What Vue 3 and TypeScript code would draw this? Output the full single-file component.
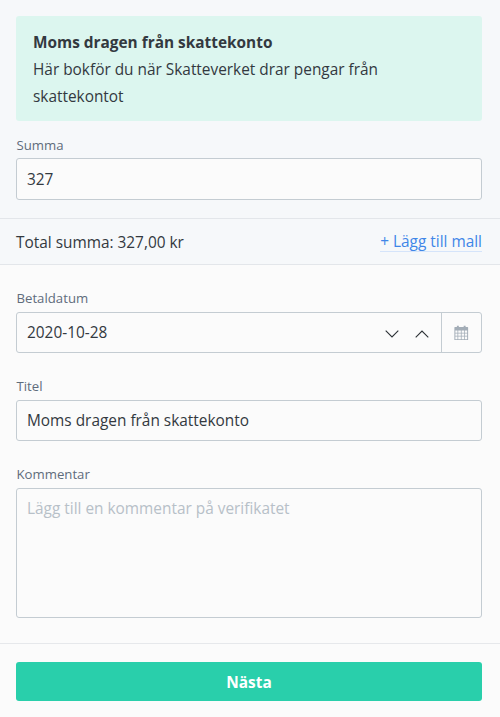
<script setup lang="ts">
const heading = 'Moms dragen från skattekonto'
</script>

<template>
  <div class="page">
    <section class="top">
      <div class="info">
        <strong>{{ heading }}</strong>
        <p>Här bokför du när Skatteverket drar pengar från skattekontot</p>
      </div>
      <label class="field first">
        <span class="label">Summa</span>
        <input class="input" value="327" />
      </label>
    </section>
    <div class="total">
      <span>Total summa: 327,00 kr</span>
      <a class="link">+ Lägg till mall</a>
    </div>
    <section class="form">
      <div class="field">
        <span class="label">Betaldatum</span>
        <div class="date">
          <span class="date-value">2020-10-28</span>
          <svg class="chev down" width="14" height="8" viewBox="0 0 14 8"><path d="M.7.7 7 6.900 13.300.7" /></svg>
          <svg class="chev up" width="14" height="8" viewBox="0 0 14 8"><path d="M.7 7.300 7 1.100l6.300 6.200" /></svg>
          <div class="cal">
            <svg width="15" height="16" viewBox="0 0 15 16">
              <path class="cal-body" fill-rule="evenodd" d="M1 2h2V.8h2V2h5V.8h2V2h2a.6.6 0 0 1 .6.6v12.600a.6.6 0 0 1-.6.6H1a.6.6 0 0 1-.6-.6V2.600A.6.6 0 0 1 1 2Zm.4 3.800v2.200h2.200V5.800Zm3 0v2.200h2.700V5.800Zm3.500 0v2.200h2.700V5.800Zm3.500 0v2.200h2.200V5.800Zm-10 3v2.200h2.200V8.800Zm3 0v2.200h2.700V8.800Zm3.500 0v2.200h2.700V8.800Zm3.500 0v2.200h2.200V8.800Zm-10 3v3h2.200v-3Zm3 0v3h2.700v-3Zm3.500 0v3h2.700v-3Zm3.500 0v3h2.200v-3Z" />
            </svg>
          </div>
        </div>
      </div>
      <label class="field">
        <span class="label">Titel</span>
        <input class="input short" value="Moms dragen från skattekonto" />
      </label>
      <label class="field">
        <span class="label">Kommentar</span>
        <textarea class="input area" placeholder="Lägg till en kommentar på verifikatet"></textarea>
      </label>
    </section>
    <footer class="foot">
      <button class="next">Nästa</button>
    </footer>
  </div>
</template>

<style>
html, body { margin: 0; background: #fbfbfb; }
</style>

<style scoped>
.page {
  width: 500px;
  height: 717px;
  box-sizing: border-box;
  background: #fbfbfb;
  color: #33393f;
  font-family: "Open Sans", "Noto Sans", sans-serif;
  font-size: 15.4px;
  overflow: hidden;
}
.top {
  background: #f6f8fa;
  padding: 16px 18px 18px 16px;
  height: 218px;
  box-sizing: border-box;
}
.info {
  background: #dcf6ef;
  border-radius: 3px;
  padding: 13px 17px;
  height: 105px;
  box-sizing: border-box;
  line-height: 27px;
}
.info strong { font-weight: 700; display: block; }
.info p { margin: 0; }
.field { display: block; margin-top: 23px; }
.field.first { margin-top: 14px; }
.label {
  display: block;
  font-size: 13.2px;
  line-height: 20px;
  color: #5f6c7b;
  margin-bottom: 3px;
  padding-left: 0.5px;
}
.form .label { margin-bottom: 4px; }
.input {
  display: block;
  width: 466px;
  height: 42px;
  box-sizing: border-box;
  margin: 0;
  padding: 0 10px;
  border: 1px solid #c4ccd2;
  border-radius: 3px;
  background: #fbfbfb;
  color: #33393f;
  font: 15.4px/24px "Open Sans", "Noto Sans", sans-serif;
  outline: none;
}
.input.short { height: 41px; }
.area {
  height: 130px;
  padding-top: 8px;
  resize: none;
}
.area::placeholder { color: #b7c0c8; opacity: 1; }
.total {
  height: 47px;
  box-sizing: border-box;
  background: #f6f8fa;
  border-top: 1px solid #e3e6ea;
  border-bottom: 1px solid #e3e6ea;
  padding: 1px 18px 0 16px;
  display: flex;
  align-items: center;
  justify-content: space-between;
}
.link {
  color: #3f86e8;
  line-height: 18px;
  border-bottom: 1px solid #d5e4fa;
}
.form { padding: 23px 18px 0 16px; }
.form > .field:first-child { margin-top: 0; }
.date {
  width: 466px;
  height: 41px;
  box-sizing: border-box;
  border: 1px solid #c4ccd2;
  border-radius: 3px;
  display: flex;
  align-items: center;
  padding-left: 10px;
}
.date-value { flex: 1; }
.chev { display: block; fill: none; stroke: #2b3035; stroke-width: 1.1; margin-top: 2px; }
.chev.up { margin-left: 16px; margin-right: 12px; }
.cal {
  width: 39px;
  align-self: stretch;
  border-left: 1px solid #c4ccd2;
  display: flex;
  align-items: center;
  justify-content: center;
}
.cal svg { display: block; width: 14.5px; height: 15.5px; }
.cal-body { fill: #a3adb7; }
.foot {
  margin-top: 25px;
  border-top: 1px solid #e6e8eb;
  padding: 18px 18px 0 16px;
}
.next {
  display: block;
  width: 466px;
  height: 39px;
  border: 0;
  border-radius: 3px;
  padding: 2px 0 0;
  background: #29cfab;
  color: #fff;
  font: 700 15.4px/24px "Open Sans", "Noto Sans", sans-serif;
}
</style>
